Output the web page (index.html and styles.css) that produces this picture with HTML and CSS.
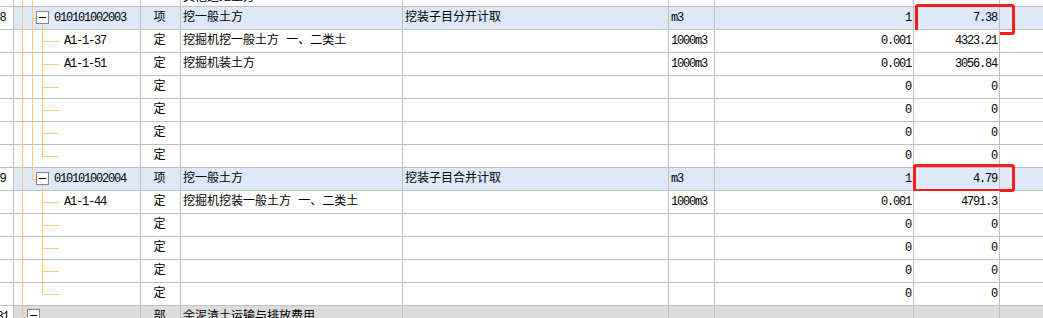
FILE: index.html
```html
<!DOCTYPE html>
<html lang="zh">
<head>
<meta charset="utf-8">
<title>清单</title>
<link rel="stylesheet" href="styles.css">
</head>
<body>
<div class="sheet">
  <div class="row">
    <div class="c num"></div>
    <div class="c tree t-top"></div>
    <div class="c type"></div>
    <div class="c name cut">其他运距土方 一 一</div>
    <div class="c desc"></div>
    <div class="c unit"></div>
    <div class="c qty"></div>
    <div class="c val"></div>
    <div class="c end"></div>
  </div>

  <div class="row hl">
    <div class="c num"><span>8</span></div>
    <div class="c tree t-node"><span class="box"></span><span class="a code">010101002003</span></div>
    <div class="c type">项</div>
    <div class="c name">挖一般土方</div>
    <div class="c desc">挖装子目分开计取</div>
    <div class="c unit a">m3</div>
    <div class="c qty a">1</div>
    <div class="c val a">7.38<span class="mark mark-a"></span></div>
    <div class="c end"></div>
  </div>

  <div class="row">
    <div class="c num"></div>
    <div class="c tree t-child"><span class="a sub">A1-1-37</span></div>
    <div class="c type">定</div>
    <div class="c name">挖掘机挖一般土方 一、二类土</div>
    <div class="c desc"></div>
    <div class="c unit a">1000m3</div>
    <div class="c qty a">0.001</div>
    <div class="c val a">4323.21</div>
    <div class="c end"></div>
  </div>

  <div class="row">
    <div class="c num"></div>
    <div class="c tree t-child"><span class="a sub">A1-1-51</span></div>
    <div class="c type">定</div>
    <div class="c name">挖掘机装土方</div>
    <div class="c desc"></div>
    <div class="c unit a">1000m3</div>
    <div class="c qty a">0.001</div>
    <div class="c val a">3056.84</div>
    <div class="c end"></div>
  </div>

  <div class="row">
    <div class="c num"></div>
    <div class="c tree t-child"></div>
    <div class="c type">定</div>
    <div class="c name"></div>
    <div class="c desc"></div>
    <div class="c unit"></div>
    <div class="c qty a">0</div>
    <div class="c val a">0</div>
    <div class="c end"></div>
  </div>

  <div class="row">
    <div class="c num"></div>
    <div class="c tree t-child"></div>
    <div class="c type">定</div>
    <div class="c name"></div>
    <div class="c desc"></div>
    <div class="c unit"></div>
    <div class="c qty a">0</div>
    <div class="c val a">0</div>
    <div class="c end"></div>
  </div>

  <div class="row">
    <div class="c num"></div>
    <div class="c tree t-child"></div>
    <div class="c type">定</div>
    <div class="c name"></div>
    <div class="c desc"></div>
    <div class="c unit"></div>
    <div class="c qty a">0</div>
    <div class="c val a">0</div>
    <div class="c end"></div>
  </div>

  <div class="row">
    <div class="c num"></div>
    <div class="c tree t-child-end"></div>
    <div class="c type">定</div>
    <div class="c name"></div>
    <div class="c desc"></div>
    <div class="c unit"></div>
    <div class="c qty a">0</div>
    <div class="c val a">0</div>
    <div class="c end"></div>
  </div>

  <div class="row hl">
    <div class="c num"><span>9</span></div>
    <div class="c tree t-node-last"><span class="box"></span><span class="a code">010101002004</span></div>
    <div class="c type">项</div>
    <div class="c name">挖一般土方</div>
    <div class="c desc">挖装子目合并计取</div>
    <div class="c unit a">m3</div>
    <div class="c qty a">1</div>
    <div class="c val a">4.79<span class="mark mark-b"></span></div>
    <div class="c end"></div>
  </div>

  <div class="row">
    <div class="c num"></div>
    <div class="c tree t-child2"><span class="a sub">A1-1-44</span></div>
    <div class="c type">定</div>
    <div class="c name">挖掘机挖装一般土方 一、二类土</div>
    <div class="c desc"></div>
    <div class="c unit a">1000m3</div>
    <div class="c qty a">0.001</div>
    <div class="c val a">4791.3</div>
    <div class="c end"></div>
  </div>

  <div class="row">
    <div class="c num"></div>
    <div class="c tree t-child2"></div>
    <div class="c type">定</div>
    <div class="c name"></div>
    <div class="c desc"></div>
    <div class="c unit"></div>
    <div class="c qty a">0</div>
    <div class="c val a">0</div>
    <div class="c end"></div>
  </div>

  <div class="row">
    <div class="c num"></div>
    <div class="c tree t-child2"></div>
    <div class="c type">定</div>
    <div class="c name"></div>
    <div class="c desc"></div>
    <div class="c unit"></div>
    <div class="c qty a">0</div>
    <div class="c val a">0</div>
    <div class="c end"></div>
  </div>

  <div class="row">
    <div class="c num"></div>
    <div class="c tree t-child2"></div>
    <div class="c type">定</div>
    <div class="c name"></div>
    <div class="c desc"></div>
    <div class="c unit"></div>
    <div class="c qty a">0</div>
    <div class="c val a">0</div>
    <div class="c end"></div>
  </div>

  <div class="row">
    <div class="c num"></div>
    <div class="c tree t-child2-end"></div>
    <div class="c type">定</div>
    <div class="c name"></div>
    <div class="c desc"></div>
    <div class="c unit"></div>
    <div class="c qty a">0</div>
    <div class="c val a">0</div>
    <div class="c end"></div>
  </div>

  <div class="row grey">
    <div class="c num"><span>31</span></div>
    <div class="c tree t-bottom"><span class="box box-top"></span></div>
    <div class="c type">部</div>
    <div class="c name">余泥渣土运输与排放费用</div>
    <div class="c desc"></div>
    <div class="c unit"></div>
    <div class="c qty"></div>
    <div class="c val"></div>
    <div class="c end"></div>
  </div>
</div>
</body>
</html>
```

FILE: styles.css
```css
html, body {
  margin: 0;
  padding: 0;
  overflow: hidden;
  background: #ffffff;
}

.sheet {
  margin-top: -16px;
  font-family: "Liberation Mono", "Noto Sans CJK SC", monospace;
  font-size: 12px;
  line-height: 1;
  color: #000000;
}

.row {
  display: grid;
  grid-template-columns: 14px 127px 40px 222px 266px 46px 199px 86px 1fr;
  height: 23px;
  border-bottom: 1px solid #c0c0c0;
  box-sizing: border-box;
}

.c {
  display: flex;
  align-items: center;
  border-right: 1px solid #c0c0c0;
  box-sizing: border-box;
  white-space: nowrap;
  min-width: 0;
  background-color: #ffffff;
}

.row.hl .c { background-color: #dde8f9; }
.row.grey .c { background-color: #dcdcdc; }
.row .c.num { background-color: #ffffff; }

.c.end { border-right: none; }

.a {
  font-family: "Liberation Mono", "DejaVu Sans Mono", monospace;
  font-size: 12px;
  letter-spacing: -1.2px;
}

.num {
  justify-content: center;
  overflow: visible;
}
.num span {
  margin-right: 8px;
  font-family: "Liberation Mono", monospace;
  font-size: 12px;
  letter-spacing: -1.2px;
}

.type { justify-content: center; padding-right: 2px; }
.name, .desc { padding-left: 2px; }
.unit { padding-left: 2px; }
.qty, .val { justify-content: flex-end; padding-right: 2px; }
.val { position: relative; }

.cut { align-items: flex-start; padding-top: 8px; overflow: hidden; }

/* tree column */
.tree {
  padding-left: 22px;
  background-repeat: no-repeat;
}
.tree .sub { margin-left: 28px; }
.tree .code { margin-left: 5px; }

.box {
  width: 13px;
  height: 13px;
  box-sizing: border-box;
  border: 1px solid #858585;
  background: #ffffff;
  position: relative;
  flex: none;
  margin-top: -1px;
}
.box::after {
  content: "";
  position: absolute;
  left: 2px;
  top: 5px;
  width: 7px;
  height: 1px;
  background: #000000;
}
.box-top {
  align-self: flex-start;
  margin-top: 3px;
  margin-left: -9px;
}

.t-top {
  background-image:
    linear-gradient(#ffc878, #ffc878),
    linear-gradient(#ffc878, #ffc878);
  background-size: 1px 100%, 1px 100%;
  background-position: 8px 0, 18px 0;
}

.t-node {
  background-image:
    linear-gradient(#ffc878, #ffc878),
    linear-gradient(#ffc878, #ffc878),
    linear-gradient(#ffc878, #ffc878),
    linear-gradient(#ffc878, #ffc878);
  background-size: 1px 100%, 1px 100%, 4px 1px, 1px 6px;
  background-position: 8px 0, 18px 0, 18px 11px, 28px 17px;
}

.t-node-last {
  background-image:
    linear-gradient(#ffc878, #ffc878),
    linear-gradient(#ffc878, #ffc878),
    linear-gradient(#ffc878, #ffc878),
    linear-gradient(#ffc878, #ffc878);
  background-size: 1px 100%, 1px 12px, 4px 1px, 1px 6px;
  background-position: 8px 0, 18px 0, 18px 11px, 28px 17px;
}

.t-child {
  background-image:
    linear-gradient(#ffc878, #ffc878),
    linear-gradient(#ffc878, #ffc878),
    linear-gradient(#ffc878, #ffc878),
    linear-gradient(#ffc878, #ffc878);
  background-size: 1px 100%, 1px 100%, 1px 100%, 17px 1px;
  background-position: 8px 0, 18px 0, 28px 0, 28px 11px;
}

.t-child-end {
  background-image:
    linear-gradient(#ffc878, #ffc878),
    linear-gradient(#ffc878, #ffc878),
    linear-gradient(#ffc878, #ffc878),
    linear-gradient(#ffc878, #ffc878);
  background-size: 1px 100%, 1px 100%, 1px 12px, 17px 1px;
  background-position: 8px 0, 18px 0, 28px 0, 28px 11px;
}

.t-child2 {
  background-image:
    linear-gradient(#ffc878, #ffc878),
    linear-gradient(#ffc878, #ffc878),
    linear-gradient(#ffc878, #ffc878);
  background-size: 1px 100%, 1px 100%, 17px 1px;
  background-position: 8px 0, 28px 0, 28px 11px;
}

.t-child2-end {
  background-image:
    linear-gradient(#ffc878, #ffc878),
    linear-gradient(#ffc878, #ffc878),
    linear-gradient(#ffc878, #ffc878);
  background-size: 1px 100%, 1px 12px, 17px 1px;
  background-position: 8px 0, 28px 0, 28px 11px;
}

.t-bottom {
  background-image:
    linear-gradient(#ffc878, #ffc878),
    linear-gradient(#ffc878, #ffc878);
  background-size: 1px 9px, 5px 1px;
  background-position: 8px 0, 8px 8px;
}

/* red highlight marks drawn over the value cells */
.mark {
  position: absolute;
  border: 3px solid #ff1a1a;
  border-radius: 3px;
  box-sizing: border-box;
  pointer-events: none;
}
.mark-a {
  left: 1px;
  top: -3px;
  width: 100px;
  height: 31px;
}
.mark-b {
  left: -1px;
  top: -4px;
  width: 102px;
  height: 28px;
}
```
